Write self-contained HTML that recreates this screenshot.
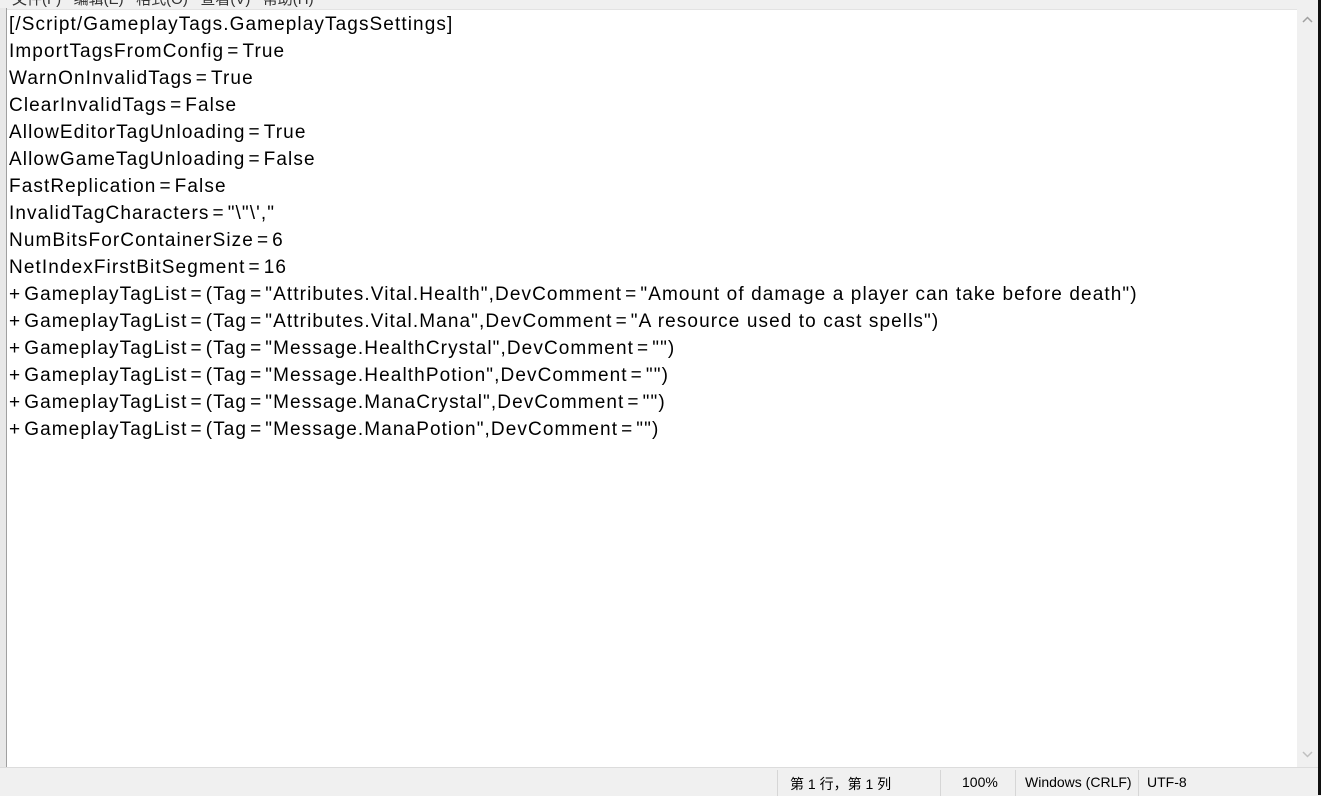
<!DOCTYPE html>
<html><head><meta charset="utf-8"><style>
body{margin:0;width:1321px;height:795px;overflow:hidden;background:#f0f0f0;font-family:"Liberation Sans","Noto Sans CJK SC",sans-serif;position:relative}
.menu{position:absolute;top:-12px;height:20px;font-size:15px;color:#333;left:12px}
.left{position:absolute;left:0;top:8px;width:6px;height:759px;background:#e8e8e8;border-right:1px solid #a0a0a0;overflow:hidden}
.edit{position:absolute;left:7px;top:9px;width:1290px;height:758px;background:#fff;border-top:1px solid #e3e3e3}
.txt{position:absolute;left:2px;top:1px;font-size:19px;line-height:27px;color:#000;white-space:pre;letter-spacing:1.1px}
.txt i{font-style:normal;margin:0 3px}
.sb{position:absolute;left:1297px;top:9px;width:21px;height:758px;background:#f0f0f0}
.edge{position:absolute;left:1318px;top:0;width:3px;height:795px;background:#111}
.status{position:absolute;left:0;top:767px;width:1318px;height:28px;background:#f0f0f0;border-top:1px solid #dcdcdc;font-size:14px;color:#000}
.status span{position:absolute;top:6px}
.sep{position:absolute;top:2px;width:1px;height:26px;background:#d6d6d6}
</style></head><body>
<div class="menu">文件(F)&nbsp;&nbsp;&nbsp;编辑(E)&nbsp;&nbsp;&nbsp;格式(O)&nbsp;&nbsp;&nbsp;查看(V)&nbsp;&nbsp;&nbsp;帮助(H)</div>
<div class="left"></div>
<div class="edit"><div class="txt">[/Script/GameplayTags.GameplayTagsSettings]
ImportTagsFromConfig<i>=</i>True
WarnOnInvalidTags<i>=</i>True
ClearInvalidTags<i>=</i>False
AllowEditorTagUnloading<i>=</i>True
AllowGameTagUnloading<i>=</i>False
FastReplication<i>=</i>False
InvalidTagCharacters<i>=</i>"\"\',"
NumBitsForContainerSize<i>=</i>6
NetIndexFirstBitSegment<i>=</i>16
<i style="margin-left:0">+</i>GameplayTagList<i>=</i>(Tag<i>=</i>"Attributes.Vital.Health",DevComment<i>=</i>"Amount of damage a player can take before death")
<i style="margin-left:0">+</i>GameplayTagList<i>=</i>(Tag<i>=</i>"Attributes.Vital.Mana",DevComment<i>=</i>"A resource used to cast spells")
<i style="margin-left:0">+</i>GameplayTagList<i>=</i>(Tag<i>=</i>"Message.HealthCrystal",DevComment<i>=</i>"")
<i style="margin-left:0">+</i>GameplayTagList<i>=</i>(Tag<i>=</i>"Message.HealthPotion",DevComment<i>=</i>"")
<i style="margin-left:0">+</i>GameplayTagList<i>=</i>(Tag<i>=</i>"Message.ManaCrystal",DevComment<i>=</i>"")
<i style="margin-left:0">+</i>GameplayTagList<i>=</i>(Tag<i>=</i>"Message.ManaPotion",DevComment<i>=</i>"")</div></div>
<div class="sb">
<svg width="21" height="758" style="position:absolute;left:0;top:0"><path d="M6 13 L10.5 8.5 L15 13" fill="none" stroke="#a0a0a0" stroke-width="1.5"/><path d="M6 743 L10.5 747.5 L15 743" fill="none" stroke="#c0c0c0" stroke-width="1.5"/></svg>
</div>
<div class="edge"></div>
<div class="status">
<div class="sep" style="left:777px"></div>
<span style="left:790px">第 1 行，第 1 列</span>
<div class="sep" style="left:940px"></div>
<span style="left:962px">100%</span>
<div class="sep" style="left:1015px"></div>
<span style="left:1025px">Windows (CRLF)</span>
<div class="sep" style="left:1138px"></div>
<span style="left:1147px">UTF-8</span>
</div>
</body></html>
